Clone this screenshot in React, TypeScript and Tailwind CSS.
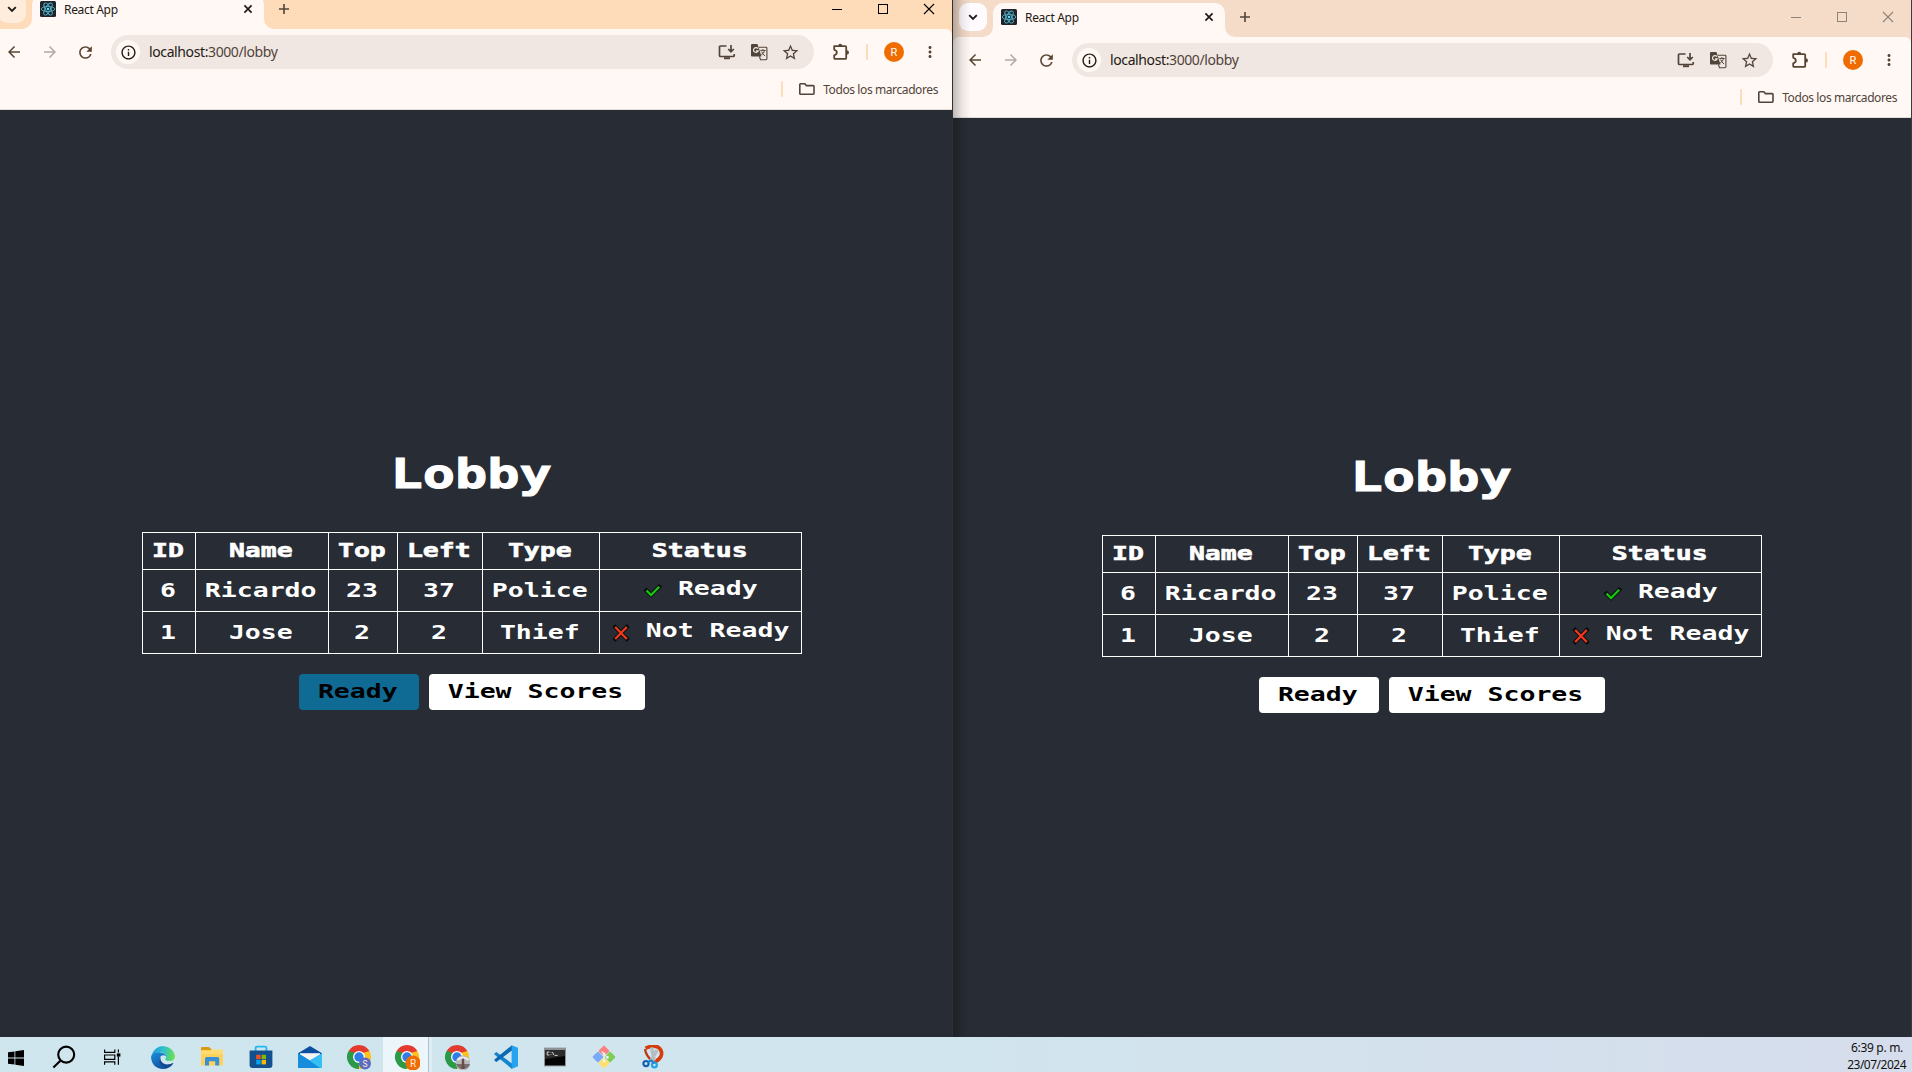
import React from "react";
import {
  MdArrowBack,
  MdArrowForward,
  MdRefresh,
  MdInfoOutline,
  MdStarOutline,
  MdMoreVert,
} from "react-icons/md";

function Wide({ text, big = false, heavy = false }: { text: string; big?: boolean; heavy?: boolean }) {
  return (
    <span className="inline-flex shrink-0 justify-center" style={{ width: text.length * (big ? 32 : 16) }}>
      <span
        className={`block scale-x-[1.34] whitespace-pre font-['DejaVu_Sans_Mono',monospace] font-bold ${
          big
            ? "-translate-x-px translate-y-px text-[40px] leading-[48px] [-webkit-text-stroke:1px_currentColor]"
            : "-translate-x-px text-[19.8px] leading-5"
        } ${heavy ? "[-webkit-text-stroke:0.6px_currentColor]" : ""}`}
      >
        {text}
      </span>
    </span>
  );
}

function ReactIcon() {
  return (
    <svg viewBox="0 0 16 16" className="size-4">
      <rect width="16" height="16" rx="1.5" fill="#20232a" />
      <g fill="none" stroke="#4fb4cc" strokeWidth="0.9">
        <ellipse cx="8" cy="8" rx="6.8" ry="2.6" />
        <ellipse cx="8" cy="8" rx="6.8" ry="2.6" transform="rotate(60 8 8)" />
        <ellipse cx="8" cy="8" rx="6.8" ry="2.6" transform="rotate(120 8 8)" />
      </g>
      <circle cx="8" cy="8" r="1.3" fill="#61dafb" />
    </svg>
  );
}

function InstallIcon() {
  return (
    <svg viewBox="0 0 18 18" className="size-[18px]" fill="none" stroke="#51443a" strokeWidth="1.7">
      <path d="M8.5 3H2.6Q1.5 3 1.5 4.1V12.4Q1.5 13.5 2.6 13.5H15Q16.2 13.5 16.2 12.4V11" />
      <path d="M6 15.2H12" strokeWidth="2" />
      <path d="M13 2V8.4M10.2 6L13 8.8L15.8 6" />
    </svg>
  );
}

function TranslateIcon() {
  return (
    <svg viewBox="0 0 18 18" className="size-[18px]">
      <path d="M2 1H7.5L11.5 13.5H2Q1 13.5 1 12.5V2Q1 1 2 1Z" fill="#51443a" />
      <path d="M7.9 5.6A2.4 2.4 0 1 0 8.2 7.8H6" fill="none" stroke="#f0e7e2" strokeWidth="1.2" />
      <path d="M9 4.3H16Q16.9 4.3 16.9 5.2V15.8Q16.9 16.7 16 16.7H10.5L9.4 13.4" fill="none" stroke="#51443a" strokeWidth="1.1" />
      <path d="M10.3 7.4H15.6M12.9 6.2V7.4M14.6 7.6Q13.8 10.4 11.2 12M11.6 8.6Q12.8 11.4 15 13" fill="none" stroke="#51443a" strokeWidth="1" />
    </svg>
  );
}

function PuzzleIcon() {
  return (
    <svg viewBox="0 0 18 18" className="size-[18px]">
      <path
        d="M2.2 3.1H13.2Q14.2 3.1 14.2 4.1V14.9Q14.2 15.9 13.2 15.9H3.2Q2.2 15.9 2.2 14.9V12.4Q4.8 11.5 4.8 9.5Q4.8 7.5 2.2 6.6Z"
        fill="none"
        stroke="#574432"
        strokeWidth="1.8"
        strokeLinejoin="round"
      />
      <path d="M6.2 2.9A2 2.2 0 0 1 10.2 2.9ZM14.6 7.2A2.4 2.2 0 0 1 14.6 11.6Z" fill="#574432" />
    </svg>
  );
}

function FolderIcon() {
  return (
    <svg viewBox="0 0 18 14" className="h-[14px] w-[18px]" fill="none" stroke="#51443a" strokeWidth="1.6">
      <path d="M1.8 2.6Q1.8 1.8 2.6 1.8H6.8L8.4 3.6H15.2Q16 3.6 16 4.4V11.2Q16 12.2 15.2 12.2H2.6Q1.8 12.2 1.8 11.4Z" />
    </svg>
  );
}

function BrowserTop({ active }: { active: boolean }) {
  const strip = active ? "bg-[#fedcba]" : "bg-[#f4dcc9]";
  const ctrl = active ? "#000000" : "#8f8379";
  return (
    <header className={`shrink-0 font-['Noto_Sans',sans-serif] ${strip}`}>
      <div className="flex h-[37px] pl-[6px]">
        <div className={`mt-[3px] flex size-7 items-center justify-center rounded-[9px] ${active ? "bg-[#feecdd]" : "bg-[#fffbff]"}`}>
          <svg viewBox="0 0 10 10" className="size-[10px]" fill="none" stroke="#1f1b16" strokeWidth="1.9">
            <path d="M1.2 3.2L5 7L8.8 3.2" />
          </svg>
        </div>
        <svg viewBox="0 0 10 10" className="ml-[-4px] size-[10px] self-end" fill="#fff8f5">
          <path d="M10 0A10 10 0 0 1 0 10H10Z" />
        </svg>
        <div className="mt-[3px] flex w-[232px] items-center rounded-t-[10px] bg-[#fff8f5] pr-[9px] pb-[6px] pl-2">
          <ReactIcon />
          <span className="mt-[2px] ml-2 text-[12px] leading-4 tracking-[-0.32px] text-[#241a12]">React App</span>
          <svg viewBox="0 0 14 14" className="ml-auto size-[14px]" stroke="#241a12" strokeWidth="1.7">
            <path d="M3.4 3.4L10.6 10.6M10.6 3.4L3.4 10.6" />
          </svg>
        </div>
        <svg viewBox="0 0 10 10" className="size-[10px] self-end" fill="#fff8f5">
          <path d="M0 0A10 10 0 0 0 10 10H0Z" />
        </svg>
        <svg viewBox="0 0 12 12" className="mt-[11px] ml-[4px] size-3" stroke="#51443a" strokeWidth="1.6">
          <path d="M6 1V11M1 6H11" />
        </svg>
        <div className="mt-[11px] mr-[17px] ml-auto flex h-3 gap-[34px]">
          <svg viewBox="0 0 12 12" className="size-3" stroke={ctrl}>
            <path d="M1 6.5H11" />
          </svg>
          <svg viewBox="0 0 12 12" className="size-3" stroke={ctrl} fill="none">
            <rect x="1.5" y="1.5" width="9" height="9" />
          </svg>
          <svg viewBox="0 0 12 12" className="size-3" stroke={ctrl} strokeWidth="1.1">
            <path d="M1 1L11 11M11 1L1 11" />
          </svg>
        </div>
      </div>
      <div className="flex h-[81px] flex-col rounded-t-[6px] border-b border-[#e3dad3] bg-[#fff8f5] pt-[6px]">
        <div className="flex h-[34px] items-center pl-[13px]">
          <MdArrowBack className="size-[18px] text-[#574432]" />
          <MdArrowForward className="ml-[18px] size-[18px] text-[#b3aaa4]" />
          <MdRefresh className="ml-[17px] size-[19px] text-[#574432]" />
          <div className="mr-[18px] ml-4 flex h-[34px] flex-1 items-center rounded-full bg-[#f0e7e2] pr-[14px] pl-[5px]">
            <div className="flex size-6 items-center justify-center rounded-full bg-[#fff8f5]">
              <MdInfoOutline className="ml-px size-[17px] text-[#241a12]" />
            </div>
            <span className="ml-[9px] text-[14px] leading-5 tracking-[-0.39px] text-[#241a12]">
              localhost:<span className="text-[#51443a]">3000/lobby</span>
            </span>
            <div className="ml-auto flex items-center gap-[14px]">
              <InstallIcon />
              <TranslateIcon />
              <MdStarOutline className="-ml-px size-[19px] text-[#51443a]" />
            </div>
          </div>
          <PuzzleIcon />
          <div className="ml-4 h-4 w-[2px] rounded bg-[#fedcba]" />
          <div className="ml-4 flex size-5 items-center justify-center rounded-full bg-[#ef6c00] font-[Roboto,sans-serif] text-[11px] leading-none text-white">
            R
          </div>
          <MdMoreVert className="mr-[13px] ml-[17px] size-[18px] text-[#574432]" />
        </div>
        <div className="mt-[12px] flex h-4 items-center justify-end pr-[14px]">
          <div className="h-4 w-[2px] rounded bg-[#fedcba]" />
          <div className="ml-[15px]">
            <FolderIcon />
          </div>
          <span className="mt-px ml-[7px] text-[12px] leading-4 tracking-[-0.4px] whitespace-nowrap text-[#51443a]">Todos los marcadores</span>
        </div>
      </div>
    </header>
  );
}

const players = [
  { id: "6", name: "Ricardo", top: "23", left: "37", type: "Police", ready: true },
  { id: "1", name: "Jose", top: "2", left: "2", type: "Thief", ready: false },
];

const headings = ["ID", "Name", "Top", "Left", "Type", "Status"];
const columns = "grid grid-cols-[53px_133px_69px_85px_117px_202px]";
const cell = "flex items-center justify-center border-r border-b border-white";

function StatusMark({ ready }: { ready: boolean }) {
  const d = ready ? "M3.5 9.5L8 14L16.2 5.8" : "M4.2 4L15.8 16M15.8 4L4.2 16";
  return (
    <svg viewBox="0 0 20 20" className="mt-[3px] mr-4 size-5 shrink-0" fill="none">
      <path d={d} stroke="#0c0f12" strokeWidth="4.2" strokeLinecap="square" />
      <path d={d} stroke={ready ? "#16c60c" : "#f03a17"} strokeWidth="2.3" />
    </svg>
  );
}

function Lobby({ pressed, offset }: { pressed: boolean; offset: string }) {
  return (
    <main className={`flex flex-1 flex-col items-center bg-[#282c34] text-white ${offset}`}>
      <h1 className="mb-[35px] h-12">
        <Wide text="Lobby" big />
      </h1>
      <div className="border-t border-l border-white">
        <div className={`${columns} h-[37px]`}>
          {headings.map((h) => (
            <div key={h} className={cell}>
              <Wide text={h} heavy />
            </div>
          ))}
        </div>
        {players.map((p) => (
          <div key={p.id} className={`${columns} h-[42px]`}>
            {[p.id, p.name, p.top, p.left, p.type].map((v, i) => (
              <div key={i} className={cell}>
                <Wide text={v} />
              </div>
            ))}
            <div className={`${cell} pb-[3px]`}>
              <StatusMark ready={p.ready} />
              <Wide text={p.ready ? "Ready" : "Not Ready"} />
            </div>
          </div>
        ))}
      </div>
      <div className="mt-5 flex gap-[10px] text-black">
        <button className={`flex h-9 w-[120px] items-center justify-center rounded-[4px] ${pressed ? "bg-[#0f6b94]" : "bg-white"}`}>
          <Wide text="Ready" />
        </button>
        <button className="flex h-9 w-[216px] items-center justify-center rounded-[4px] bg-white">
          <Wide text="View Scores" />
        </button>
      </div>
    </main>
  );
}

function ChromeLogo({ badge }: { badge: "S" | "R" | "photo" }) {
  return (
    <svg viewBox="0 0 26 26" className="size-[26px]">
      <path d="M13 13L2.6 7A12 12 0 0 1 23.4 7Z" fill="#e33b2e" />
      <path d="M13 13L23.4 7A12 12 0 0 1 13 25Z" fill="#fcc31e" />
      <path d="M13 13V25A12 12 0 0 1 2.6 7Z" fill="#2b9a47" />
      <path d="M13 7H23.4L18.2 16Z" fill="#fcc31e" />
      <path d="M2.6 7L7.8 16L13 7Z" fill="#2b9a47" />
      <path d="M2.6 7H23.4L13 10Z" fill="#e33b2e" />
      <circle cx="13" cy="13" r="6" fill="#fff" />
      <circle cx="13" cy="13" r="4.7" fill="#2f7de9" />
      {badge === "S" && <circle cx="19" cy="19.5" r="6" fill="#5c6bc0" />}
      {badge === "R" && <circle cx="19" cy="19" r="7.6" fill="#ef6c00" />}
      {badge === "photo" && (
        <>
          <circle cx="19" cy="19" r="7.4" fill="#b9b8bd" />
          <path d="M12 20H26A7.4 7.4 0 0 1 12 20Z" fill="#77706f" />
          <path d="M18 14H20L20.6 25H17.4Z" fill="#6a4b45" />
          <path d="M13.5 16Q19 11 24.5 16" stroke="#e9edf1" strokeWidth="2" fill="none" />
        </>
      )}
      {badge !== "photo" && (
        <text
          x="19"
          y={22.6}
          textAnchor="middle"
          fontFamily="Roboto, sans-serif"
          fontSize={badge === "S" ? 8.5 : 10}
          fill="#ffe9dd"
        >
          {badge}
        </text>
      )}
    </svg>
  );
}

function EdgeLogo() {
  return (
    <svg viewBox="0 0 24 24" className="size-6">
      <defs>
        <linearGradient id="edgeTop" x1="0" y1="0.4" x2="1" y2="0.5">
          <stop offset="0" stopColor="#1b9de2" />
          <stop offset="0.5" stopColor="#2fc1c9" />
          <stop offset="1" stopColor="#6fe04c" />
        </linearGradient>
        <linearGradient id="edgeLow" x1="0" y1="0" x2="0.6" y2="1">
          <stop offset="0" stopColor="#1a8fdc" />
          <stop offset="1" stopColor="#0f4f9e" />
        </linearGradient>
      </defs>
      <path d="M0.6 10A12 12 0 0 1 24 11Q24 16 18.6 16Q14.2 16 14.2 14.2Q15.4 13 15 11Q14 7.4 9 7.2Q3.6 7.2 0.6 10Z" fill="url(#edgeTop)" />
      <path d="M0 12Q0.4 7.2 8 7.2Q14.4 7.6 15 11.6Q12 8.8 9.6 11.6Q7 15.8 11.4 19.2Q16 21.4 22.4 18Q18.6 24 12 24Q1 23.6 0 12Z" fill="url(#edgeLow)" />
      <path d="M9.4 12Q6.4 16.4 10.6 20.6Q13.4 22.8 16.6 22.8Q21 21 22.6 18Q17 20.6 12.6 18.6Q9 16.4 9.4 12Z" fill="#124a8f" />
    </svg>
  );
}

function ExplorerLogo() {
  return (
    <svg viewBox="0 0 24 22" className="h-[22px] w-6">
      <path d="M1 2Q1 1 2 1H9L11.5 3.4V7H1Z" fill="#d99a0c" />
      <rect x="1" y="4" width="22" height="15.5" rx="1.2" fill="#fbd25c" />
      <path d="M1 5.2H10L12 3.4H22Q23 3.4 23 4.4V8H1Z" fill="#ffdc72" />
      <path d="M5 19.6V12.6Q5 11 6.6 11H17.6Q19.2 11 19.2 12.6V19.6H15.2V15.2H9V19.6Z" fill="#3a8fd6" />
    </svg>
  );
}

function StoreLogo() {
  return (
    <svg viewBox="0 0 24 24" className="size-6">
      <path d="M6.6 6V3Q6.6 1.6 8 1.6H16Q17.4 1.6 17.4 3V6" fill="none" stroke="#22b8f0" strokeWidth="1.9" />
      <path d="M0.6 5.4H23.4V20.6Q23.4 23 21 23H3Q0.6 23 0.6 20.6Z" fill="#14508d" />
      <rect x="7.2" y="9.8" width="4.4" height="4.4" fill="#f25022" />
      <rect x="12.6" y="9.8" width="4.4" height="4.4" fill="#7fba00" />
      <rect x="7.2" y="15" width="4.4" height="4.4" fill="#00a4ef" />
      <rect x="12.6" y="15" width="4.4" height="4.4" fill="#ffb900" />
    </svg>
  );
}

function MailLogo() {
  return (
    <svg viewBox="0 0 24 24" className="size-6">
      <path d="M0 8.2L12 1L24 8.2V12H0Z" fill="#0d4f9f" />
      <path d="M2 8.2H22V16H2Z" fill="#f5f5f5" />
      <path d="M0 8.2L12 15.4L24 8.2V23H0Z" fill="#1f9fe4" />
      <path d="M24 8.2V23H20L7 12.4L12 15.4Z" fill="#35c0f5" />
      <path d="M0 8.2V23H22L7 12.4Z" fill="#168ddc" />
    </svg>
  );
}

function CodeLogo() {
  return (
    <svg viewBox="0 0 24 24" className="size-6">
      <path d="M0.4 8.4L2.4 7L18 18.6V24L0.4 9.6Z" fill="#1484cf" />
      <path d="M0.4 15.6L2.4 17L18 5.4V0.2L0.4 14.4Z" fill="#0a6ab2" />
      <path d="M17.6 0.2L24 2.8V21.2L17.6 24Z" fill="#24a3f1" />
    </svg>
  );
}

function TerminalLogo() {
  return (
    <svg viewBox="0 0 22 20" className="h-5 w-[22px]">
      <rect x="0" y="0.6" width="22" height="18.8" fill="#8d9297" />
      <rect x="1" y="3" width="20" height="15.4" fill="#050505" />
      <path d="M1 3H21V9L1 12Z" fill="#2c2c2c" />
      <path d="M5.4 5H3.2V8H5.4M7 5.4V6M7 7.4V8M8.4 5L9.8 8M10.6 8.4H13.6" stroke="#e8e8e8" strokeWidth="0.9" fill="none" />
    </svg>
  );
}

function GitLogo() {
  return (
    <svg viewBox="0 0 24 24" className="size-6">
      <g transform="rotate(45 12 12)" strokeWidth="0">
        <rect x="3.7" y="3.7" width="8" height="8" rx="1" fill="#fb8080" />
        <rect x="12.3" y="3.7" width="8" height="8" rx="1" fill="#7fce52" />
        <rect x="3.7" y="12.3" width="8" height="8" rx="1" fill="#7aa9f7" />
        <rect x="12.3" y="12.3" width="8" height="8" rx="1" fill="#ffe06a" />
      </g>
      <path d="M9.6 6.4L12 8.8V16M12 9L15.4 12.4" stroke="#e8eef2" strokeWidth="1.3" fill="none" />
      <circle cx="12" cy="9" r="1.4" fill="#eef2f5" />
      <circle cx="15.4" cy="12.4" r="1.4" fill="#eef2f5" />
      <circle cx="12" cy="16.2" r="1.4" fill="#eef2f5" />
    </svg>
  );
}

function SnipLogo() {
  return (
    <svg viewBox="0 0 24 24" className="size-6" fill="none">
      <path d="M4.6 3.2Q12 -0.4 17.4 2.4Q22 6 20 11.4Q18 15.4 13 17" stroke="#d63b0b" strokeWidth="3.6" />
      <path d="M4 4Q5 11 11 15.6" stroke="#c2340a" strokeWidth="2.2" />
      <path d="M10.6 2.4L13.2 15.6M16.2 5L9.4 16.6" stroke="#b7bcc2" strokeWidth="3.4" />
      <circle cx="5" cy="18.6" r="2.6" stroke="#1263b0" strokeWidth="2.2" />
      <circle cx="13.4" cy="20" r="2.4" stroke="#22a4ea" strokeWidth="2.2" />
      <path d="M7 17L10.4 15.4L12.8 18" stroke="#1b7bc8" strokeWidth="2" />
    </svg>
  );
}

function Taskbar() {
  const slot = "flex h-full w-[49px] items-center justify-center";
  return (
    <footer className="flex h-[35px] shrink-0 bg-linear-to-r from-[#cfe6ee] via-[#d1e5ee] to-[#d6ddec]">
      <div className="flex h-full w-8 items-center justify-center pt-[6px]">
        <svg viewBox="0 0 16 16" className="size-4" fill="#000">
          <path d="M0 2.3L6.5 1.4V7.6H0ZM7.3 1.3L16 0V7.6H7.3ZM0 8.4H6.5V14.6L0 13.7ZM7.3 8.4H16V16L7.3 14.7Z" />
        </svg>
      </div>
      <div className="flex h-full w-16 items-center justify-center pt-1">
        <svg viewBox="0 0 24 24" className="size-6" fill="none" stroke="#000" strokeWidth="2.1">
          <circle cx="14.2" cy="9.6" r="8" />
          <path d="M8.6 15.4L1.4 22.6" />
        </svg>
      </div>
      <div className="flex h-full w-8 items-center justify-center pt-1">
        <svg viewBox="0 0 18 18" className="size-[18px]" fill="none" stroke="#000" strokeWidth="1.2">
          <path d="M1.6 1.6V4.4H11.8V1.6M1.6 16.8V13.8H11.8V16.8M1.6 7H11.8V11.4H1.6ZM15.4 1.6V4.4M15.4 8.6V16.8" />
          <rect x="14.4" y="6" width="2.4" height="2" fill="#000" />
        </svg>
      </div>
      <div className="ml-[10px] flex h-full pt-1">
        <div className={slot}><EdgeLogo /></div>
        <div className={slot}><ExplorerLogo /></div>
        <div className={slot}><StoreLogo /></div>
        <div className={slot}><MailLogo /></div>
        <div className={slot}><ChromeLogo badge="S" /></div>
        <div className="-mt-1 flex h-[35px] w-[46px] items-center justify-center border-r border-[#a9c3d2] bg-[#ecf5f9] pt-1 pl-[3px] shadow-[3px_0_0_#deedf3]">
          <ChromeLogo badge="R" />
        </div>
        <div className="ml-[3px] flex h-full w-[49px] items-center justify-center"><ChromeLogo badge="photo" /></div>
        <div className={slot}><CodeLogo /></div>
        <div className={slot}><TerminalLogo /></div>
        <div className={slot}><GitLogo /></div>
        <div className={slot}><SnipLogo /></div>
      </div>
      <div className="mr-[6px] ml-auto flex flex-col items-end pt-[2px] font-['Noto_Sans',sans-serif] text-[12px] leading-[17px] text-[#111]">
        <span className="mr-[3px] tracking-[-0.3px]">6:39 p. m.</span>
        <span className="tracking-[-0.5px]">23/07/2024</span>
      </div>
    </footer>
  );
}

export default function App() {
  return (
    <div className="flex h-[1072px] w-[1912px] flex-col overflow-hidden bg-[#282c34]">
      <div className="flex h-[1037px] shrink-0 overflow-hidden">
        <section className="-mt-2 -ml-2 flex w-[960px] shrink-0 flex-col">
          <BrowserTop active />
          <Lobby pressed offset="pt-[339px]" />
        </section>
        <div className="w-px shrink-0 bg-[#33302f]" />
        <section className="relative flex w-[958px] shrink-0 flex-col">
          <BrowserTop active={false} />
          <Lobby pressed={false} offset="pt-[334px]" />
          <div className="pointer-events-none absolute inset-y-0 left-0 w-[18px] bg-linear-to-r from-black/25 via-black/8 to-transparent" />
        </section>
        <div className="w-px shrink-0 bg-[#3b3a3c]" />
      </div>
      <Taskbar />
    </div>
  );
}
